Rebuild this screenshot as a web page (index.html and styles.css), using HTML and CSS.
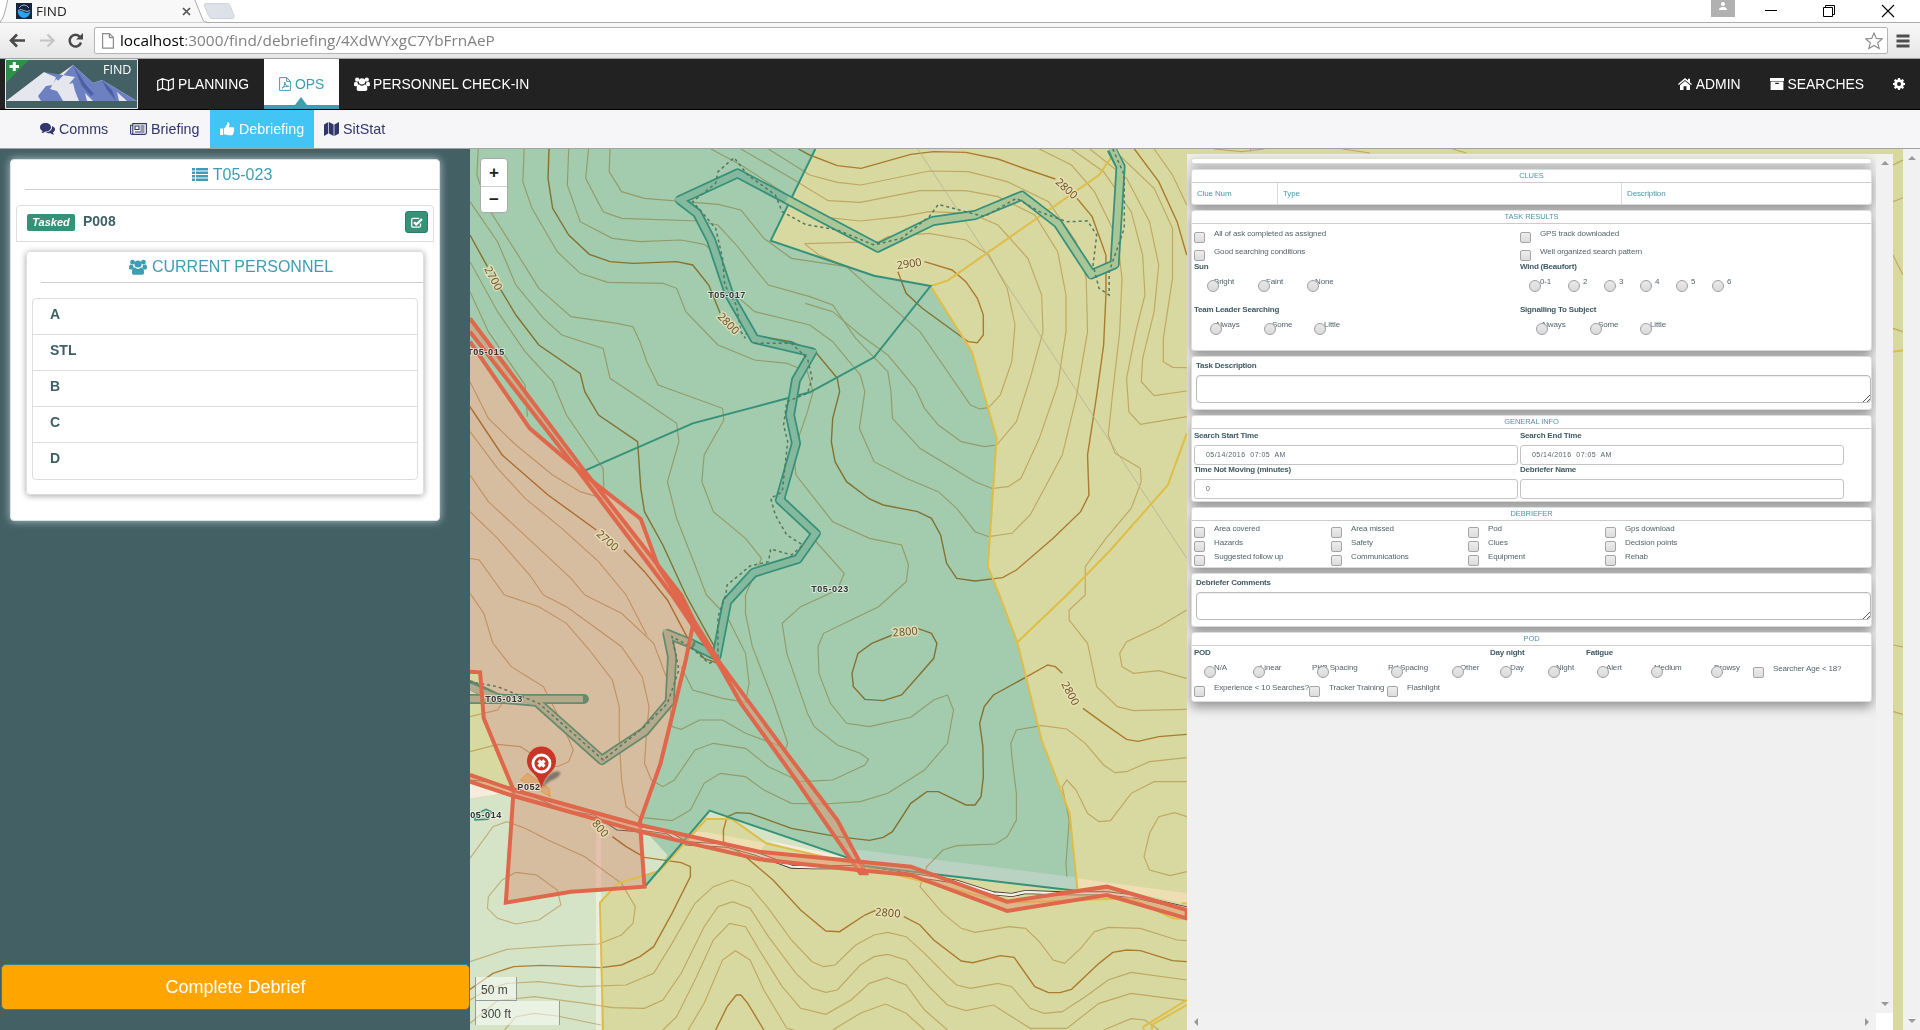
FILE: index.html
```html
<!DOCTYPE html>
<html lang="en">
<head>
<meta charset="utf-8">
<title>FIND</title>
<link rel="stylesheet" href="styles.css">
</head>
<body>
<svg width="0" height="0" class="defs">
  <defs>
    <symbol id="i-users" viewBox="0 0 30 26"><circle cx="6" cy="5" r="4"/><circle cx="24" cy="5" r="4"/><circle cx="15" cy="8" r="6"/><path d="M0 15c0-4 1-6 3-6 2 1 3 1 4 1 0 3 1 4 2 5-2 0-3 1-4 2H2c-1 0-2-1-2-2zM30 15c0-4-1-6-3-6-2 1-3 1-4 1 0 3-1 4-2 5 2 0 3 1 4 2h3c1 0 2-1 2-2zM5 22c0-5 1-8 5-8 3 3 7 3 10 0 4 0 5 3 5 8 0 3-1 4-4 4H9c-3 0-4-1-4-4z"/></symbol>
    <symbol id="i-list" viewBox="0 0 16 13"><path d="M0 0h3v2.400H0zM4 0h12v2.400H4zM0 3.500h3v2.400H0zM4 3.500h12v2.400H4zM0 7h3v2.400H0zM4 7h12v2.400H4zM0 10.500h3V13H0zM4 10.500h12V13H4z"/></symbol>
    <symbol id="i-map-o" viewBox="0 0 17 13"><path d="M.7 2.700 5.500.7v9.600L.7 12.300zM5.500.7l6 2v9.600l-6-2M11.500 2.700l4.800-2v9.600l-4.800 2" fill="none" stroke="currentColor" stroke-width="1.200"/></symbol>
    <symbol id="i-map" viewBox="0 0 15 14"><path d="M0 2.500 4.300 0v11.500L0 14zM5 0l4.600 2.500V14L5 11.500zM10.400 2.500 15 0v11.500L10.400 14z"/></symbol>
    <symbol id="i-pdf" viewBox="0 0 12 14"><path d="M.6.600h7l3.800 3.800v9H.6zM7.600.6v3.800h3.800M3 11.300c2-1 3-4 2.700-6.300.3 3 2 4.500 4 4.300-2-.5-4.700 0-6.700 2z" fill="none" stroke="currentColor" stroke-width="1"/></symbol>
    <symbol id="i-comments" viewBox="0 0 15 12"><path d="M5.500 0C9 0 11 2 11 4.200S9 8.500 5.500 8.500C4 9.700 2.500 10 1.300 10c.8-.6 1.200-1.300 1.200-2.100C1 7.100 0 5.800 0 4.200 0 2 2 0 5.500 0z"/><path d="M12 3c2 .8 3 2 3 3.300 0 1.400-.8 2.500-2 3.200.1.900.5 1.500 1.300 2.200-1.600 0-2.800-.5-3.800-1.400-2 .1-3.300-.2-4.500-1C9.600 9 12 7 12 4.300z"/></symbol>
    <symbol id="i-news" viewBox="0 0 17 12"><path d="M2.800.6h13.600v9.200c0 1-.6 1.600-1.500 1.600H2c-.9 0-1.400-.6-1.400-1.500V2.200h2.200zM2.800 2v8c0 .8-.3 1.300-1 1.400M5 3h4v3.500H5zM10.500 3h4M10.500 5h4M10.500 7h4M5 9h9.500" fill="none" stroke="currentColor" stroke-width="1.100"/></symbol>
    <symbol id="i-thumb" viewBox="0 0 15 14"><path d="M0 6.500h3.200V13H0zM4 6.500C6 5 7 3 7.200.8 7.300 0 9.500 0 9.500 2.500c0 1-.3 2-.7 2.800h4c1.500 0 1.900 1.500 1 2.300.7.600.6 1.600-.2 2 .5.700.2 1.500-.5 1.800.2 1.300-.7 1.900-2 1.900H8.500c-1.700 0-2.700-1-4.500-1z"/></symbol>
    <symbol id="i-home" viewBox="0 0 14 12"><path d="M7 0l3 2.600V.8h2v3.600l2 1.700-.8.900L7 1.900.8 7 0 6.100zM7 3l5 4.200V12H8.500V8.300h-3V12H2V7.200z"/></symbol>
    <symbol id="i-archive" viewBox="0 0 14 12"><path d="M0 0h14v3H0zM.6 3.600h12.800V12H.6zM5.200 4.700v1.200h3.600V4.700z" fill-rule="evenodd"/></symbol>
    <symbol id="i-gear" viewBox="0 0 12 12"><path d="M5 0h2l.3 1.600 1 .4L9.700 1 11 2.400l-.9 1.300.4 1L12 5v2l-1.500.3-.4 1 .9 1.300L9.700 11l-1.400-.9-1 .4L7 12H5l-.3-1.500-1-.4-1.400.9L1 9.600l.9-1.300-.4-1L0 7V5l1.500-.3.4-1L1 2.400 2.300 1l1.400 1 1-.4zM6 4a2 2 0 100 4 2 2 0 000-4z" fill-rule="evenodd"/></symbol>
    <symbol id="i-check" viewBox="0 0 12 11"><path d="M9.500 6.500v2.200c0 .9-.6 1.500-1.500 1.500H2.200c-.9 0-1.500-.6-1.500-1.500V2.800c0-.9.6-1.500 1.500-1.500h6" fill="none" stroke="currentColor" stroke-width="1.300"/><path d="M3 5.200l2.300 2.200L11 2" fill="none" stroke="currentColor" stroke-width="2.200"/></symbol>
  </defs>
</svg>

<header class="chrome">
  <div class="tabs">
    <svg class="tab-shape" width="240" height="23" viewBox="0 0 240 23">
      <path d="M0 23V22C4 18 6 8 8-2H194L203 20Q204 22.500 208 22.500V23z" fill="#f8f8f8" stroke="#a9a9a9"/>
      <path d="M206 3.500h21q2.500 0 3.500 3l3.500 9q1 3-2 3h-20q-2.500 0-3.500-3l-4-9.500q-1-2.500 1.500-2.500z" fill="#dde1e8" stroke="#cfd3da"/>
    </svg>
    <div class="tab">
      <svg class="favicon" width="16" height="16" viewBox="0 0 16 16"><path d="M0 0h16v16H0z" fill="#16263f"/><path d="M1.500 8.500Q5 7 8 9t6.500-.5Q13 15 8 15T1.500 8.500z" fill="#2aa4ee"/><path d="M3 5q2-3 5-3t5 3M2 7.500q3-2 6 0t6 0" fill="none" stroke="#9fb4c0"/></svg>
      <span>FIND</span>
      <svg class="tab-close" width="9" height="9" viewBox="0 0 9 9"><path d="M1 1l7 7M8 1L1 8" stroke="#555" stroke-width="1.700"/></svg>
    </div>
    <div class="window-buttons">
      <svg width="200" height="22" viewBox="0 0 200 22">
        <path d="M0 0h24v17H0z" fill="#b1b1b1"/><circle cx="12" cy="4" r="2" fill="#fff"/><path d="M8 10q0-3 4-3t4 3z" fill="#fff"/>
        <path d="M54 10.500h12" stroke="#000"/><path d="M112.500 7.500h9v9h-9zM114.500 7V5.500h9v9H122" fill="none" stroke="#000"/>
        <path d="M171 5l12 12M183 5l-12 12" stroke="#000" stroke-width="1.100"/>
      </svg>
    </div>
  </div>
  <div class="toolbar">
    <svg class="nav-arrows" width="84" height="34" viewBox="0 0 84 34">
      <path d="M11 17.500h14M17 11.500l-6 6 6 6" fill="none" stroke="#4a4a4a" stroke-width="2.600"/>
      <path d="M40 17.500h13M47.500 11.500l6 6-6 6" fill="none" stroke="#c4c4c4" stroke-width="2.200"/>
      <path d="M80 14A5.800 5.800 0 1081 19.500" fill="none" stroke="#4a4a4a" stroke-width="2.500"/><path d="M83 10v6.500h-7z" fill="#4a4a4a"/>
    </svg>
    <div class="omnibox">
      <svg width="12" height="16" viewBox="0 0 12 16"><path d="M.6.600h6.800l4 4v10.500H.6zM7.400.6v4h4" fill="#fff" stroke="#8b8b8b" stroke-width="1.200"/></svg>
      <span class="url"><b>localhost</b>:3000/find/debriefing/4XdWYxgC7YbFrnAeP</span>
      <svg class="star" width="18" height="18" viewBox="0 0 18 18"><path d="M9 1l2.300 5.400 5.900.5-4.500 3.900 1.400 5.700L9 13.500l-5.100 3 1.400-5.700L.8 6.900l5.900-.5z" fill="#fff" stroke="#8e8e8e" stroke-width="1.200"/></svg>
    </div>
    <svg class="burger" width="14" height="14" viewBox="0 0 14 14"><path d="M.5 2h13M.5 7h13M.5 12h13" stroke="#4e4e4e" stroke-width="3"/></svg>
  </div>
</header>

<nav class="navbar">
  <svg class="logo" width="133" height="50" viewBox="0 0 133 50">
    <path d="M.5.500h132v49H.5z" fill="#436065" stroke="#e4e8e8"/>
    <path d="M1 1h23L1 24z" fill="#2a9147"/><path d="M7.800 3h3v9h-3zM4.500 6h9.500v3H4.500z" fill="#fff"/>
    <path d="M1 42L39 13l12 5L68 6l20 18 9-3 35 21z" fill="#e6e7ee"/>
    <path d="M39 13l12 5-3 8-7 1-8 10 3 5h22l-5-9-2-9 17-18 20 18 9-3 35 21h-10l-10-9 2 9H88l-8-8 2 8h-8l-4-10-2-8-4 1 6-7z" fill="#6d80c0"/>
    <path d="M51 20l7 5-5 3 8 6-3 6-6-8-7-2z" fill="#e6e7ee"/>
    <path d="M68 6l13 20 8 9-3 2-9-10zM97 21l10 10 4 11-9-11z" fill="#4d5fa6"/>
    <text x="98" y="14.500" class="logo-text">FIND</text>
  </svg>
  <a class="nav-item planning"><svg width="17" height="13"><use href="#i-map-o"/></svg>PLANNING</a>
  <a class="nav-item ops"><svg width="12" height="14"><use href="#i-pdf"/></svg>OPS</a>
  <a class="nav-item people"><svg width="16" height="14"><use href="#i-users"/></svg>PERSONNEL CHECK-IN</a>
  <div class="nav-right">
    <a class="nav-item"><svg width="14" height="12"><use href="#i-home"/></svg>ADMIN</a>
    <a class="nav-item"><svg width="14" height="12"><use href="#i-archive"/></svg>SEARCHES</a>
    <a class="nav-item"><svg width="12" height="12"><use href="#i-gear"/></svg></a>
  </div>
</nav>

<nav class="subnav">
  <a class="sub comms"><svg width="15" height="12"><use href="#i-comments"/></svg>Comms</a>
  <a class="sub briefing"><svg width="17" height="12"><use href="#i-news"/></svg>Briefing</a>
  <a class="sub active"><svg width="15" height="14"><use href="#i-thumb"/></svg>Debriefing</a>
  <a class="sub sitstat"><svg width="15" height="14"><use href="#i-map"/></svg>SitStat</a>
</nav>

<main class="main">
  <aside class="side">
    <section class="task-card">
      <h2 class="card-title"><svg width="16" height="13"><use href="#i-list"/></svg>T05-023</h2>
      <div class="task-row"><em class="badge">Tasked</em><strong>P008</strong><button class="check-btn"><svg width="12" height="11"><use href="#i-check"/></svg></button></div>
      <section class="personnel">
        <h2 class="card-title"><svg width="18" height="16"><use href="#i-users"/></svg>CURRENT PERSONNEL</h2>
        <ul class="people-list"><li>A</li><li>STL</li><li>B</li><li>C</li><li>D</li></ul>
      </section>
    </section>
    <button class="complete">Complete Debrief</button>
  </aside>

  <div class="map">
    <svg class="terrain" width="1433" height="881" viewBox="0 12 3121 2643" preserveAspectRatio="none">
      <path fill="#d7d9a0" d="M0 0h3121v2660H0z"/>
      <path fill="#a3cbad" d="M0 0H754L655 287 880 392 1003 423 1093 620 1147 880 1128 1265 1153 1350 1192 1492 1245 1785 1306 2005 1323 2237 860 2165 820 2137 522 1997 382 2223 300 1600 0 600z"/>
      <path fill="#b9d2c1" d="M820 2110L1320 2197 1323 2237 860 2163z"/>
      <path fill="#d5e4c6" d="M0 1960L95 1945 380 2055 430 2130 412 2178 322 2215 283 2273 290 2660H0zM515 2022L522 1997 820 2137 645 2095 570 2022z"/>
      <path fill="#f5ecdc" d="M0 1915L95 1942 0 1960zM645 2085L820 2137 840 2150 690 2110z"/>
      <path fill="#eddfb2" d="M480 2060L515 2062 700 2108 645 2095 630 2120 470 2085zM1323 2200L1561 2245 1561 2278 1387 2225 1323 2240z"/>
      <path fill="#d7bda0" d="M0 590L130 850 245 985 372 1122 410 1265 487 1430 470 1545 415 1855 370 2030 380 2225 220 2240 78 2273 95 1935 30 1720 22 1582 0 1580z"/>
      <path stroke="#e9eede" stroke-width="5" d="M280 2240V2660"/><path stroke="#e6c0ae" stroke-width="5" d="M280 2060V2240"/>

      <g class="contour">
        <path d="M18 12L15 90 40 190 100 320 150 430 220 515 320 535 355 545 370 590 385 650 410 720 550 790 553 825 510 930 505 1010 530 1100 600 1180 635 1240 600 1350"/>
        <path d="M118 12L115 110 135 190 190 320 240 385 300 412 420 415 450 430 470 500 540 600 620 645 690 655 735 680 747 740 735 800 705 920 710 990 790 1130 870 1180 940 1200 955 1260 950 1310 918 1350"/>
        <path d="M215 12L212 120 240 230 310 280 370 290 460 285 510 298 540 330 545 370 570 440 620 500 740 540 790 590 850 690 860 740 848 850 880 950 950 1000 1020 1040 1060 1090 1100 1160 1130 1175"/>
        <path d="M258 12L252 100 290 200 330 220 500 228 540 240 580 300 620 370 650 420 740 455 790 480 840 580 910 680 917 740 920 820 980 910 1100 1010 1140 1032"/>
        <path d="M305 12L303 80 330 140 380 160 540 178 590 195 640 280 700 340 820 365 880 440 980 560 1060 720 1090 780 1110 792 1128 788"/>
        <path d="M525 12L590 60 680 140 760 215 850 228 940 215 1000 200 1090 205 1150 240 1215 340 1245 450 1248 560 1220 700 1190 830 1147 900 1120 905 1070 890 1020 840 990 790 970 730 910 630 850 570 790 500 730 475"/>
        <path d="M590 12L700 100 780 167 850 172 980 137 1080 137 1150 155 1230 210 1280 320 1298 450 1298 560 1280 720 1240 880 1200 1000 1172 1025 1140 1030"/>
        <path d="M650 12L740 90 800 112 852 120 1000 78 1085 80 1170 110 1260 170 1320 290 1342 400 1345 560 1320 760 1290 930 1220 1110 1180 1165 1130 1175"/>
        <path d="M0 170L60 290 100 420 160 520 200 570 290 610 305 700 370 760 450 835 455 890 430 1010 450 1120 490 1260 515 1350"/>
        <path d="M0 350L60 500 120 620 180 710 210 810 290 970 292 1060"/><path d="M0 440L40 560 120 720 125 815"/>
        <path d="M685 1080L760 1200 815 1285 800 1335"/>
        <path d="M728 296L890 290 910 275 1000 265 1080 285 1130 330 1170 430 1187 540 1180 650 1155 750 1130 787M728 296L760 330 830 370"/>
        <path d="M1240 12L1310 60 1360 140 1410 280 1420 400 1415 560 1400 740 1390 870 1405 925 1460 970 1462 1010 1440 1090 1385 1180 1340 1265V1350L1305 1395V1425L1345 1495 1365 1625 1410 1685 1445 1697 1561 1693"/>
        <path d="M1310 12L1380 80 1440 200 1465 330 1470 450 1450 560 1430 700 1435 800 1460 838 1561 815"/>
        <path d="M1350 12L1430 100 1480 230 1500 360 1490 500 1465 640 1462 710 1490 752 1561 738"/>
        <path d="M1400 12L1490 130 1530 250 1530 400 1510 580 1510 650 1530 667 1561 668M1490 12L1530 90 1561 180"/>
        <path d="M0 710L40 820 100 900 180 990 240 1040 290 1060M0 860L60 970 120 1060 200 1150 280 1250 340 1350L385 1470M0 990L40 1070 150 1210 220 1300 250 1350M0 1100L60 1180 130 1290 160 1350M0 1240L20 1245 75 1350"/>
      </g>
      <g class="contour index">
        <path d="M715 12L740 30 800 62 852 70 960 28 1010 20 1080 22 1150 42 1210 72 1275 102M1322 160L1355 215 1385 330 1385 450 1380 600 1365 750 1345 930 1348 1050 1330 1100 1270 1180 1190 1275 1160 1298 1100 1308 1060 1300 1038 1255 1025 1170 1005 1120 975 1100 900 1080 870 1062 820 1010 795 950 787 890 790 820 805 740 800 700 755 625 700 590 600 567M545 505L520 420 485 360 450 350 355 355 305 350 260 328 215 270 180 190 170 100 172 12"/>
        <path d="M0 270L38 365M65 430L100 510 150 600 240 685 250 740 280 810 365 890 372 1030 380 1100 420 1200 470 1350 520 1475 545 1535 540 1555 510 1540 480 1495 430 1365 380 1280 335 1215M0 785L70 930 170 1050 275 1155"/>
        <path d="M932 380L940 410 950 445 985 490 1065 570 1085 590 1105 593 1118 570 1118 510 1105 460 1080 410 1050 375 990 350"/>
        <path d="M1447 12L1500 110 1540 230 1561 330"/>
      </g>

      <g transform="translate(0 1305)">
        <g class="contour">
          <path d="M75 45L150 80 210 130 260 210 310 300 325 380 325 470 330 600 340 680 370 712 440 722 480 690 510 610 545 580 600 590 640 630 700 670 770 672 850 665 910 640 990 570 1040 490 1053 390 1040 345 1010 360 960 412 870 440 820 430 785 370 760 280 758 200 770 160 830 120 890 80 918 45"/>
          <path d="M160 45L210 80 260 130 330 200 375 290 390 380 385 450 380 550 395 600 420 620 445 600 490 510 530 490 600 505 650 560 720 605 790 600 860 555 868 538 850 520 800 495 750 440 735 400 690 220 680 130 720 80 800 30"/>
          <path d="M250 45L330 100 400 190 430 300 440 440 460 448 500 420 550 420 600 460 688 505 692 490 660 360 615 200 600 100V45M515 45L560 110 600 220 608 310 600 367 550 355 485 330 460 260"/>
          <path d="M0 40L30 100 50 190 90 260 160 320 200 430 225 510 215 545 190 560 160 545 110 500 60 493 0 515M0 410L60 390 75 360"/>
          <path d="M1300 890L1298 850 1305 720 1290 620 1300 600 1320 630 1345 700 1370 725 1395 722 1440 640 1490 605 1561 605M1561 710L1535 698 1500 710 1480 760 1468 830 1480 870 1525 887 1561 875M1561 90L1500 140 1430 185 1415 220 1420 260 1445 280 1500 272 1561 295"/>
          <path d="M1561 533L1480 545 1430 575 1405 578 1380 555 1340 490 1300 447 1245 437 1190 450 1178 490 1180 530 1190 640 1190 720 1170 770 1145 792 1060 797 1030 810 995 860 980 920 1030 1000 1070 1045 1100 1057 1175 1040 1210 1045 1240 1085 1270 1140 1295 1150 1330 1105 1360 1055 1390 1042 1460 1045 1540 1080 1561 1082"/>
          <path d="M0 835L50 740 80 725 120 745 170 780 250 830 330 910 360 980 355 1030 330 1065 280 1092 200 1097 80 1108 0 1145M100 877L145 885 190 930 198 975 150 1020 100 1032 60 1015 38 985 40 950 70 900z"/>
          <path d="M0 1260L40 1228 80 1210 150 1205 240 1220 340 1215 400 1180 440 1090 490 970 530 920 570 900 610 920 650 985 700 1080 745 1145 770 1160 795 1155 840 1095 880 1065 910 1057 950 1070 990 1120 1040 1190 1060 1215 1090 1225 1150 1210 1180 1220 1220 1285 1250 1300 1290 1295 1340 1250 1390 1200 1440 1177 1561 1200"/>
          <path d="M0 1330L60 1262 140 1250 250 1270 310 1283 380 1285 420 1260 460 1180 510 1040 540 980 572 965 610 985 650 1070 710 1180 745 1225 775 1237 800 1230 850 1155 880 1130 910 1123 950 1140 1000 1220 1040 1275 1080 1292 1140 1275 1180 1310 1220 1345 1300 1345 1370 1270 1440 1240 1561 1262"/>
          <path d="M75 1350L100 1310 140 1300 190 1308 285 1335M420 1350L450 1310 490 1200 530 1080 565 1030 600 1040 630 1110 680 1220 720 1285 775 1303 830 1260 870 1210 908 1193 950 1215 990 1290 1040 1350M475 1350L510 1270 550 1140 578 1112 610 1140 640 1230 690 1345 710 1352M790 1350L850 1300 905 1272 950 1300 990 1350M1380 1350L1440 1316 1470 1320 1500 1350"/>
        </g>
        <g class="contour index">
          <path d="M920 165L875 190 845 220 832 280 835 320 860 358 900 362 940 345 975 290 1010 235 1017 190 1005 160 975 145"/>
          <path d="M1561 463L1500 470 1455 484 1430 478 1380 430 1335 385M1290 280L1275 260 1258 255 1210 292 1140 345 1120 380 1110 430 1117 500 1118 590 1113 650 1100 675 1080 675 1020 635 995 635 960 670 920 755 900 772 870 781 800 770 700 745 640 715 610 700 580 698 560 710 552 750V785L600 830 660 900 720 990 775 1053 805 1055 860 1005 885 990M945 1010L980 1035 1010 1080 1070 1143 1095 1148 1155 1127 1185 1132 1230 1220 1260 1238 1285 1238 1310 1228 1370 1150 1400 1117 1430 1110 1460 1112 1530 1142 1561 1145"/>
          <path d="M0 1228L50 1180 95 1160 155 1156 285 1163 330 1155 370 1130 400 1100 440 1000 480 890V860L460 848 380 832 340 800 310 770M535 1350L560 1280 580 1245 590 1245 605 1270 640 1350"/>
        </g>
        <path d="M370 745L430 757 470 790 560 797 620 820 700 860 750 862 850 862 960 885 1060 905 1140 940 1180 945 1210 936 1290 940 1387 940 1450 950 1561 985" class="track-case"/>
        <path d="M370 745L430 757 470 790 560 797 620 820 700 860 750 862 850 862 960 885 1060 905 1140 940 1180 945 1210 936 1290 940 1387 940 1450 950 1561 985" class="track-core"/>
        <path d="M0 600L40 605 110 630 200 690 270 705 320 750 370 755" class="thin-road"/>
      </g>

      <path class="power" d="M975 12L1561 1240"/>
      <g class="contour"><path d="M1620 12l60 8 50-8M1700 12v8M1900 12l60 12M2140 12l30 12M3099 60l22-15M3099 330l22 60M3099 550l22 10M3100 1500l21 6M3100 1700l21 8M3099 170l22-12"/></g>
      <path class="amber" d="M1400 12L1395 40 1370 90 1040 407 1003 423 1093 620 1147 880 1128 1265 1153 1350 1192 1492 1245 1785 1306 2005 1323 2235M1192 1492L1300 1350 1395 1215 1520 1020 1561 865M290 2660L283 2273 322 2215 412 2178 515 2022H570L645 2095 860 2165 1170 2273 1440 2260 1530 2320 1561 2322M1561 2565L1467 2645V2660M1561 2580L1485 2640V2660M3099 620l22-4M1550 2275h11"/>
      <path class="spruce" d="M752 12L655 287 880 392 1003 423 880 637 740 742 485 835 245 980M382 2223L522 1997 820 2137 860 2163 1320 2237"/>
      <path d="M110 1905L125 1885 172 1930 175 1955z" fill="#dca878" stroke="#dfa045"/>
      <path d="M10 2008l25-15 12 8-8 22-28 2z" fill="#b5d6b5" stroke="#35917a" stroke-width="1.500"/>

      <path class="line-case" d="M1397 12L1417 65 1404 358 1353 388 1280 235 1202 152 1100 210 1008 228 888 308 583 85 457 165 495 205 525 285 565 450 620 582 745 622 710 705 697 810 710 895 675 1065 753 1165 714 1242 618 1283 560 1370 537 1533 480 1495"/>
      <path class="line-core" d="M700 170L583 85 457 165 495 205 525 285 565 450 620 582 745 622 710 705 697 810 710 895 675 1065 753 1165 714 1242 618 1283 560 1370 537 1533 480 1495"/>
      <path class="line-core on-amber" d="M1395 0L1417 65 1404 358 1353 388 1280 235 1202 152 1100 210 1008 228 888 308 690 163"/>
      <path class="line-case faded" d="M480 1495L430 1467 440 1535 435 1670 380 1760 287 1845 145 1670 60 1660 0 1620M0 1662H248"/>
      <path class="line-core faded" d="M484 1497L430 1467 440 1535 435 1670 380 1760 287 1845 145 1670 60 1660 -10 1620M-10 1662H246"/>
      <path class="dashes" d="M1400 12L1425 90 1425 250 1392 380V450L1370 430 1357 360 1365 270 1345 228 1300 230 1240 200 1190 160 1120 215 1020 178 1000 215 940 280 880 300 800 255 730 238 680 200 665 150 605 90 575 38 540 80 535 115 485 170 535 250 550 340 555 420 580 480 590 560 600 580 M620 595H700L735 640 745 700 735 745 690 770 683 840 692 890 680 1040 655 1060 665 1110 690 1170 725 1200 700 1230 655 1212 650 1250 610 1263 560 1320 557 1350 540 1415V1545L520 1555 480 1505 440 1475 455 1575 430 1675 380 1745 290 1845 150 1675 60 1625 0 1610"/>

      <path class="red-road" d="M0 520L245 970 460 1350 487 1425 545 1555 690 1825 800 2025 862 2185 850 2185 790 2065 700 1885 590 1675 545 1565 440 1350 240 985 0 560"/>
      <path class="red" d="M0 590L130 850 245 985 372 1122 410 1265 487 1430 470 1545 415 1855 370 2030 380 2225 220 2240 78 2273 95 1935 30 1720 22 1582 0 1580"/>
      <path class="red-road" d="M0 1890L95 1935 290 2010 370 2040 630 2120 960 2165 1170 2270 1387 2225 1561 2295V2320L1387 2250 1170 2298 960 2190 860 2177 630 2143 370 2060 95 1953 0 1910"/>
    </svg>

    <svg class="labels" width="717" height="881" viewBox="470 149 717 881">
      <g class="elev">
        <text transform="translate(494 278) rotate(62)">2700</text><text transform="translate(729 323) rotate(45)">2800</text>
        <text transform="translate(909 263) rotate(-8)">2900</text><text transform="translate(1067 188) rotate(42)">2800</text>
        <text transform="translate(608 540) rotate(42)">2700</text><text transform="translate(905 631) rotate(-5)">2800</text>
        <text transform="translate(1071 693) rotate(62)">2800</text><text transform="translate(888 912) rotate(5)">2800</text>
        <text transform="translate(601 828) rotate(50)">800</text>
      </g>
      <g class="names">
        <text x="727" y="297.500">T05-017</text><text x="486" y="354.500">T05-015</text><text x="830" y="591.500">T05-023</text>
        <text x="504" y="701.500">T05-013</text><text x="529" y="789.500">P052</text><text x="483" y="817.500">T05-014</text>
      </g>
      <path class="pin-shadow" d="M541 788l6-11q7-7 13-5 2 4-10 9z" fill="#444"/>
      <path d="M541.500 788Q539 778 531 771A14.500 14.500 0 11552 771Q544 778 541.500 788z" fill="#cb3527"/>
      <circle cx="541.500" cy="763.500" r="8.500" fill="#cb3527" stroke="#fff" stroke-width="2.800"/><path d="M538.500 760.500l6 6M544.500 760.500l-6 6" stroke="#fff" stroke-width="3.400"/>
    </svg>

    <div class="zoom"><span>+</span><span>−</span></div>
    <div class="scale"><div class="metric">50 m</div><div class="imperial">300 ft</div></div>

    <div class="panel">
      <form class="form">
        <section class="card sliver"></section>
        <section class="card clues"><h3>CLUES</h3><div class="clue-head"><span>Clue Num</span><span>Type</span><span>Description</span></div></section>
        <section class="card results"><h3>TASK RESULTS</h3>
          <div class="two">
            <label class="cb tall"><i></i>All of ask completed as assigned</label><label class="cb tall"><i></i>GPS track downloaded</label>
            <label class="cb tall"><i></i>Good searching conditions</label><label class="cb tall"><i></i>Well organized search pattern</label>
            <div class="group"><h4>Sun</h4><div class="radios sun"><label><i></i>Bright</label><label><i></i>Faint</label><label><i></i>None</label></div></div>
            <div class="group"><h4>Wind (Beaufort)</h4><div class="radios wind"><label><i></i>0-1</label><label><i></i>2</label><label><i></i>3</label><label><i></i>4</label><label><i></i>5</label><label><i></i>6</label></div></div>
            <div class="group"><h4>Team Leader Searching</h4><div class="radios often"><label><i></i>Always</label><label><i></i>Some</label><label><i></i>Little</label></div></div>
            <div class="group"><h4>Signalling To Subject</h4><div class="radios often"><label><i></i>Always</label><label><i></i>Some</label><label><i></i>Little</label></div></div>
          </div>
        </section>
        <section class="card note"><h4>Task Description</h4><div class="area"><svg width="8" height="8"><path d="M1 8L8 1M5 8l3-3" stroke="#555"/></svg></div></section>
        <section class="card info"><h3>GENERAL INFO</h3>
          <div class="two">
            <div class="field"><h4>Search Start Time</h4><div class="input">05/14/2016&nbsp; 07:05&nbsp; AM</div></div>
            <div class="field"><h4>Search End Time</h4><div class="input">05/14/2016&nbsp; 07:05&nbsp; AM</div></div>
            <div class="field"><h4>Time Not Moving (minutes)</h4><div class="input">0</div></div>
            <div class="field"><h4>Debriefer Name</h4><div class="input"></div></div>
          </div>
        </section>
        <section class="card topics"><h3>DEBRIEFER</h3>
          <div class="four">
            <label class="cb"><i></i>Area covered</label><label class="cb"><i></i>Area missed</label><label class="cb"><i></i>Pod</label><label class="cb"><i></i>Gps download</label>
            <label class="cb"><i></i>Hazards</label><label class="cb"><i></i>Safety</label><label class="cb"><i></i>Clues</label><label class="cb"><i></i>Decision points</label>
            <label class="cb"><i></i>Suggested follow up</label><label class="cb"><i></i>Communications</label><label class="cb"><i></i>Equipment</label><label class="cb"><i></i>Rehab</label>
          </div>
        </section>
        <section class="card note"><h4>Debriefer Comments</h4><div class="area"><svg width="8" height="8"><path d="M1 8L8 1M5 8l3-3" stroke="#555"/></svg></div></section>
        <section class="card pod"><h3>POD</h3>
          <div class="pod-groups">
            <div class="group"><h4>POD</h4><div class="radios spacing"><label><i></i>N/A</label><label><i></i>Linear</label><label><i></i>PKB Spacing</label><label><i></i>Rd Spacing</label><label><i></i>Other</label></div></div>
            <div class="group"><h4>Day night</h4><div class="radios daynight"><label><i></i>Day</label><label><i></i>Night</label></div></div>
            <div class="group"><h4>Fatigue</h4><div class="radios fatigue"><label><i></i>Alert</label><label><i></i>Medium</label><label><i></i>Drowsy</label></div></div>
            <label class="cb age"><i></i>Searcher Age &lt; 18?</label>
          </div>
          <div class="pod-checks"><label class="cb"><i></i>Experience &lt; 10 Searches?</label><label class="cb"><i></i>Tracker Training</label><label class="cb"><i></i>Flashlight</label></div>
        </section>
      </form>
      <div class="scroll-y"><b class="up"></b><b class="down"></b></div>
      <div class="scroll-x"><b class="left"></b><b class="right"></b></div>
      <div class="corner"></div>
    </div>
  </div>
  <div class="page-scroll"><b class="up"></b><b class="down"></b></div>
</main>
</body>
</html>
```
FILE: styles.css
```css
* { box-sizing: border-box; }
body { margin: 0; width: 1920px; height: 1030px; overflow: hidden; display: flex; flex-direction: column; background: #fff; font: 14px/20px "Liberation Sans", Arial, sans-serif; }
h2, h3, h4, ul { margin: 0; padding: 0; font-weight: normal; }
svg { display: block; flex: none; fill: currentColor; }
.defs { position: absolute; }

.chrome { height: 59px; flex: none; border-bottom: 1px solid #a0a0a0; font-family: "Open Sans", "Noto Sans", sans-serif; }
.tabs { height: 23px; display: flex; position: relative; border-bottom: 1px solid #ababab; }
.tab-shape { position: absolute; left: 0; top: 0; }
.tab { position: relative; display: flex; align-items: center; width: 200px; height: 22px; padding-left: 16px; font-size: 13.500px; color: #222; }
.tab span { margin-left: 4px; width: 146px; }
.favicon { margin-top: -1px; }
.window-buttons { margin-left: 1511px; width: 200px; }
.toolbar { display: flex; height: 35px; padding-top: 4px; background: linear-gradient(#f8f8f8, #e6e6e6); }
.nav-arrows { margin: -4px 10px 0 0; }
.omnibox { display: flex; align-items: center; width: 1794px; height: 27px; padding: 0 4px 0 7px; border: 1px solid #b4b4b4; border-radius: 2px; background: #fff; }
.url { flex: 1; margin: -2px 0 0 6px; font-size: 15.350px; color: #808080; }
.url b { font-weight: normal; color: #000; }
.burger { margin: 7px 0 0 8px; }

.navbar { flex: none; height: 51px; display: flex; padding-left: 5px; background: #222; border-bottom: 1px solid #000; color: #fff; font-size: 13.900px; }
.logo-text { font: 12.500px "Open Sans", sans-serif; fill: #fff; }
.nav-item { display: flex; align-items: center; gap: 4px; height: 50px; }
.planning { margin-left: 19px; width: 107px; }
.ops { position: relative; width: 75px; padding-left: 15px; background: #fff; color: #3d9db3; border-bottom: 4px solid #3d9db3; padding-top: 4px; }
.ops::after { content: ""; position: absolute; left: 31px; bottom: 0; border: 6px solid transparent; border-top: 0; border-bottom: 8px solid #3d9db3; }
.people { margin-left: 15px; gap: 3px; }
.nav-right { display: flex; gap: 29px; margin-left: auto; padding-right: 15px; }

.subnav { flex: none; display: flex; height: 39px; padding-left: 40px; background: #f6f6f9; border-bottom: 1px solid #a0a4a4; color: #32366b; font-size: 14.300px; }
.sub { display: flex; align-items: center; gap: 4px; height: 38px; }
.comms { width: 90px; } .briefing { width: 80px; }
.active { width: 104px; padding-left: 10px; margin-right: 10px; background: #42c5f5; color: #fff; }

.main { flex: 1; display: flex; min-height: 0; }
.side { width: 470px; display: flex; flex-direction: column; justify-content: space-between; padding: 10px 0 20px; background: #436065; }
.task-card { width: 430px; height: 362px; margin-left: 10px; padding: 0 6px; border: 1px solid #dde3e4; border-radius: 4px; background: #fff; box-shadow: 0 0 8px rgba(230,240,240,.7); }
.card-title { display: flex; justify-content: center; align-items: center; gap: 5px; height: 30px; margin: 0 -6px 15px 8px; border-bottom: 1px solid #ccc; color: #3d9db3; font-size: 16px; }
.task-row { display: flex; width: 418px; height: 37px; padding: 5px 5px 0 10px; margin-left: -1px; border: 1px solid #ddd; border-radius: 4px 4px 0 0; color: #3f5f66; }
.badge { width: 48px; height: 17px; margin: 3px 8px 0 0; border-radius: 2px; background: #359177; color: #fff; font: italic bold 11px/17px "Liberation Sans", sans-serif; text-align: center; }
.check-btn { width: 23px; height: 22px; margin: 0 0 0 auto; padding: 0 0 0 5px; border: 1px solid #2a7d64; border-radius: 3px; background: #359177; color: #fff; }
.personnel { width: 398px; height: 244px; margin: 9px 0 0 9px; padding: 1px 5px; border: 1px solid #ddd; border-radius: 4px; box-shadow: 0 1px 6px rgba(0,0,0,.35); }
.personnel .card-title { margin: 0 -5px 15px 9px; padding: 0 2px 2px 0; }
.people-list { width: 386px; border: 1px solid #ddd; border-radius: 4px; list-style: none; color: #3f5f66; font-weight: bold; }
.people-list li { height: 36px; padding: 5px 0 0 17px; border-bottom: 1px solid #ddd; }
.people-list li:last-child { border: 0; }
.complete { width: 469px; height: 46px; margin-left: 1px; border: 1px solid #2f8295; border-radius: 5px; background: #ffa500; color: #fff; font: 18px "Liberation Sans", sans-serif; }

.map { position: relative; flex: 1; overflow: hidden; background: #d7d9a0; }
.terrain { fill: none; }
.terrain path { vector-effect: non-scaling-stroke; }
.contour { stroke: #e5c49c; stroke-width: 1.150; mix-blend-mode: multiply; }
.index { stroke: #cd9048; stroke-width: 1.400; }
.power { stroke: #b5b096; stroke-width: .8; }
.amber { stroke: #dfbd47; stroke-width: 2; }
.spruce { stroke: #35917a; stroke-width: 2; }
.line-case { stroke: #35917a; stroke-width: 10; stroke-linejoin: round; }
.line-core { stroke: #84b99d; stroke-width: 6.500; }
.line-core.on-amber { stroke: #a9c697; }
.line-case.faded { stroke: #668a6d; stroke-linecap: round; }
.line-core.faded { stroke: #b4aa8b; }
.dashes { stroke: #56775f; stroke-width: 1.500; stroke-dasharray: 3 3; }
.red { stroke: #df674b; stroke-width: 4; }
.red-road { stroke: #df674b; stroke-width: 4; fill: rgba(223,150,115,.5); }
.track-case { stroke: #40362f; stroke-width: 4; } .track-core { stroke: #f4f0ea; stroke-width: 2.400; }
.thin-road { stroke: #7c594c; stroke-width: 1; }
.labels { position: absolute; left: 0; top: 0; }
.elev text { font: 11px "Noto Sans", sans-serif; text-anchor: middle; dominant-baseline: central; fill: #70562d; stroke: rgba(235,225,185,.75); stroke-width: 3px; paint-order: stroke; }
.names text { font: bold 9px "Liberation Sans", sans-serif; letter-spacing: .6px; text-anchor: middle; fill: #333; stroke: rgba(255,255,255,.55); stroke-width: 2px; paint-order: stroke; }
.pin-shadow { opacity: .6; filter: blur(1px); }
.zoom { position: absolute; left: 10px; top: 9px; width: 28px; height: 55px; border: 1px solid #aaa; border-radius: 4px; background: #fff; font: bold 17px/27px "Liberation Sans", sans-serif; text-align: center; color: #222; }
.zoom span { display: block; height: 27px; } .zoom span + span { border-top: 1px solid #ccc; line-height: 26px; }
.scale { position: absolute; left: 5px; bottom: 5px; font-size: 12px; line-height: 26px; color: #444; }
.scale div { height: 24px; padding-left: 5px; border: 1px solid #999; border-top: 0; background: rgba(255,255,255,.5); }
.metric { width: 42px; } .scale .imperial { width: 85px; border-bottom: 0; }

.panel { position: absolute; left: 717px; top: 5px; width: 706px; bottom: 0; display: grid; grid-template: 1fr 17px / 689px 17px; background: #f0f0f0; font-size: 8px; color: #54656b; letter-spacing: -.14px; }
.form { overflow: hidden; padding: 4px; display: flex; flex-direction: column; gap: 5px; }
.card { width: 681px; flex: none; border: 1px solid #ddd; border-radius: 3px; background: #fff; box-shadow: 0 5px 12px rgba(0,0,0,.4); }
.card h3 { height: 13px; border-bottom: 1px solid #ccc; font-size: 7.500px; line-height: 12px; text-align: center; color: #4c97a8; letter-spacing: -.1px; }
.card h4 { height: 10px; font-size: 8px; line-height: 10px; font-weight: bold; color: #3f5a64; white-space: nowrap; letter-spacing: -.22px; }
.sliver { height: 6px; } .clues { height: 36px; } .results { height: 141px; } .note { height: 54px; padding: 4px 0 0 4px; } .info { height: 87px; } .topics { height: 61px; } .pod { height: 70px; }
.clue-head { display: grid; grid-template-columns: 85px 344px 1fr; height: 21px; line-height: 21px; color: #4c97a8; }
.clue-head span { padding-left: 5px; } .clue-head span + span { border-left: 1px solid #ddd; }
.two { display: grid; grid-template-columns: 326px 326px; padding: 2px 0 0 2px; }
.four { display: grid; grid-template-columns: repeat(4, 137px); padding-left: 2px; }
.cb { display: flex; height: 14px; line-height: 15px; white-space: nowrap; }
.cb.tall { height: 18px; }
.cb i { flex: none; width: 11px; height: 11px; margin: 6px 9px 0 0; border: 1px solid #a5a5a5; border-radius: 2px; background: linear-gradient(#ededed, #dcdcdc); }
.group { height: 43px; }
.radios { display: grid; padding: 4.500px 0 0 20px; line-height: 10px; white-space: nowrap; }
.radios label { position: relative; }
.radios i { position: absolute; left: var(--dot, -8px); top: 3.500px; width: 12px; height: 12px; border: 1px solid #a0a0a0; border-radius: 50%; background: linear-gradient(#e8e8e8, #dadada); }
.sun { grid-template-columns: 52px 49px 50px; } .sun label:first-child { --dot: -7px; }
.wind { grid-template-columns: 43px repeat(5, 36px); } .wind label { --dot: -15px; } .wind label:first-child { --dot: -11px; }
.often { grid-template-columns: 57px 52px 50px; padding-left: 21px; } .often label:first-child { --dot: -5px; } .often label:last-child { --dot: -10px; }
.area { position: relative; width: 675px; height: 28px; margin-top: 4px; border: 1px solid #bbb; border-radius: 4px; box-shadow: inset 0 1px 1px #eee; }
.area svg { position: absolute; right: 0; bottom: 0; }
.field { height: 34px; }
.input { width: 324px; height: 20px; margin-top: 4px; padding-left: 11px; border: 1px solid #c4c4c4; border-radius: 3px; font-size: 7px; line-height: 18px; letter-spacing: .45px; }
.pod-groups { display: grid; grid-template-columns: 296px 96px 167px 1fr; height: 34px; padding: 2px 0 0 2px; }
.spacing { grid-template-columns: 46px 52px 76px 72px 40px; } .spacing label:nth-child(1) { --dot: -10px; } .spacing label:nth-child(2) { --dot: -7px; } .spacing label:nth-child(3) { --dot: 5px; } .spacing label:nth-child(4) { --dot: 3px; }
.daynight { grid-template-columns: 46px 40px; } .daynight label:first-child { --dot: -10px; }
.fatigue { grid-template-columns: 48px 60px 40px; } .fatigue label { --dot: -3px; } .fatigue label:first-child { --dot: -9px; }
.age { margin-top: 13px; }
.pod-checks { display: grid; grid-template-columns: 115px 78px 80px; padding-left: 2px; }

.scroll-y, .page-scroll { display: flex; flex-direction: column; justify-content: space-between; align-items: center; background: #f1f1f1; padding: 7px 0; }
.page-scroll { width: 17px; }
.scroll-x { display: flex; justify-content: space-between; align-items: center; padding: 0 7px; background: #f1f1f1; }
.corner { background: #fff; }
.up, .down { border: 4px solid transparent; } .up { border-top: 0; border-bottom-color: #999; } .down { border-bottom: 0; border-top-color: #999; }
.left, .right { border: 4px solid transparent; } .left { border-left: 0; border-right-color: #999; } .right { border-right: 0; border-left-color: #999; }
```
